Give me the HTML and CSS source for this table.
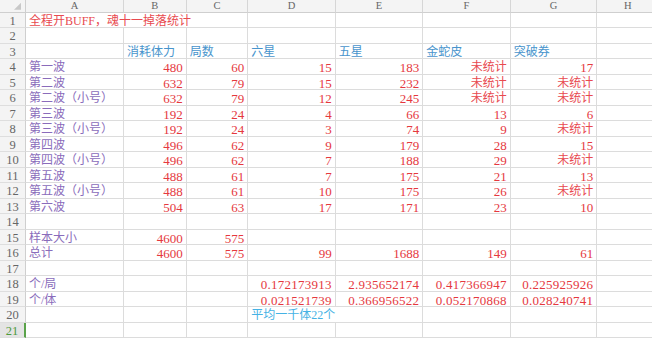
FILE: index.html
```html
<!DOCTYPE html>
<html lang="zh-CN">
<head>
<meta charset="utf-8">
<title>魂十一掉落统计</title>
<link rel="stylesheet" href="styles.css">
</head>
<body>
<div class="sheet">
  <div class="corner"><span class="tri"></span></div>
  <div class="ch">A</div><div class="ch">B</div><div class="ch">C</div><div class="ch">D</div><div class="ch">E</div><div class="ch">F</div><div class="ch">G</div><div class="ch">H</div>

  <div class="rh">1</div><div class="c title span3">全程开BUFF，魂十一掉落统计</div><div class="c"></div><div class="c"></div><div class="c"></div><div class="c"></div><div class="c"></div>

  <div class="rh">2</div><div class="c"></div><div class="c"></div><div class="c"></div><div class="c"></div><div class="c"></div><div class="c"></div><div class="c"></div><div class="c"></div>

  <div class="rh">3</div><div class="c"></div><div class="c hd">消耗体力</div><div class="c hd">局数</div><div class="c hd">六星</div><div class="c hd">五星</div><div class="c hd">金蛇皮</div><div class="c hd">突破券</div><div class="c"></div>

  <div class="rh">4</div><div class="c lb">第一波</div><div class="c n">480</div><div class="c n">60</div><div class="c n">15</div><div class="c n">183</div><div class="c nt">未统计</div><div class="c n">17</div><div class="c"></div>

  <div class="rh">5</div><div class="c lb">第二波</div><div class="c n">632</div><div class="c n">79</div><div class="c n">15</div><div class="c n">232</div><div class="c nt">未统计</div><div class="c nt">未统计</div><div class="c"></div>

  <div class="rh">6</div><div class="c lb">第二波（小号）</div><div class="c n">632</div><div class="c n">79</div><div class="c n">12</div><div class="c n">245</div><div class="c nt">未统计</div><div class="c nt">未统计</div><div class="c"></div>

  <div class="rh">7</div><div class="c lb">第三波</div><div class="c n">192</div><div class="c n">24</div><div class="c n">4</div><div class="c n">66</div><div class="c n">13</div><div class="c n">6</div><div class="c"></div>

  <div class="rh">8</div><div class="c lb">第三波（小号）</div><div class="c n">192</div><div class="c n">24</div><div class="c n">3</div><div class="c n">74</div><div class="c n">9</div><div class="c nt">未统计</div><div class="c"></div>

  <div class="rh">9</div><div class="c lb">第四波</div><div class="c n">496</div><div class="c n">62</div><div class="c n">9</div><div class="c n">179</div><div class="c n">28</div><div class="c n">15</div><div class="c"></div>

  <div class="rh">10</div><div class="c lb">第四波（小号）</div><div class="c n">496</div><div class="c n">62</div><div class="c n">7</div><div class="c n">188</div><div class="c n">29</div><div class="c nt">未统计</div><div class="c"></div>

  <div class="rh">11</div><div class="c lb">第五波</div><div class="c n">488</div><div class="c n">61</div><div class="c n">7</div><div class="c n">175</div><div class="c n">21</div><div class="c n">13</div><div class="c"></div>

  <div class="rh">12</div><div class="c lb">第五波（小号）</div><div class="c n">488</div><div class="c n">61</div><div class="c n">10</div><div class="c n">175</div><div class="c n">26</div><div class="c nt">未统计</div><div class="c"></div>

  <div class="rh">13</div><div class="c lb">第六波</div><div class="c n">504</div><div class="c n">63</div><div class="c n">17</div><div class="c n">171</div><div class="c n">23</div><div class="c n">10</div><div class="c"></div>

  <div class="rh">14</div><div class="c"></div><div class="c"></div><div class="c"></div><div class="c"></div><div class="c"></div><div class="c"></div><div class="c"></div><div class="c"></div>

  <div class="rh">15</div><div class="c lb">样本大小</div><div class="c n">4600</div><div class="c n">575</div><div class="c"></div><div class="c"></div><div class="c"></div><div class="c"></div><div class="c"></div>

  <div class="rh">16</div><div class="c lb">总计</div><div class="c n">4600</div><div class="c n">575</div><div class="c n">99</div><div class="c n">1688</div><div class="c n">149</div><div class="c n">61</div><div class="c"></div>

  <div class="rh">17</div><div class="c"></div><div class="c"></div><div class="c"></div><div class="c"></div><div class="c"></div><div class="c"></div><div class="c"></div><div class="c"></div>

  <div class="rh">18</div><div class="c lb">个/局</div><div class="c"></div><div class="c"></div><div class="c n dec">0.172173913</div><div class="c n dec">2.935652174</div><div class="c n dec">0.417366947</div><div class="c n dec">0.225925926</div><div class="c"></div>

  <div class="rh">19</div><div class="c lb">个/体</div><div class="c"></div><div class="c"></div><div class="c n dec">0.021521739</div><div class="c n dec">0.366956522</div><div class="c n dec">0.052170868</div><div class="c n dec">0.028240741</div><div class="c"></div>

  <div class="rh">20</div><div class="c"></div><div class="c"></div><div class="c"></div><div class="c note span2">平均一千体22个</div><div class="c"></div><div class="c"></div><div class="c"></div>

  <div class="rh sel">21</div><div class="c"></div><div class="c"></div><div class="c"></div><div class="c"></div><div class="c"></div><div class="c"></div><div class="c"></div><div class="c"></div>
</div>
</body>
</html>
```

FILE: styles.css
```css
html, body {
  margin: 0;
  padding: 0;
  background: #ffffff;
  overflow: hidden;
}

.sheet {
  display: grid;
  grid-template-columns: 26px 98px 62.7px 61.6px 87.4px 87.6px 87.4px 86.6px 62px;
  grid-template-rows: 12.7px repeat(21, 15.5px);
  width: 660px;
  font-family: "Liberation Serif", "Noto Sans CJK SC", serif;
  font-size: 12px;
}

.corner {
  background: #f4f4f4;
  border-right: 1px solid #cfcfcf;
  border-bottom: 1px solid #cfcfcf;
  box-sizing: border-box;
  display: flex;
  justify-content: flex-end;
  align-items: flex-end;
  padding: 0 4px 2px 0;
}

.tri {
  width: 7px;
  height: 7px;
  background: #c8c8c8;
  clip-path: polygon(100% 0, 100% 100%, 0 100%);
}

.ch {
  background: #f4f4f4;
  border-right: 1px solid #d6d6d6;
  border-bottom: 1px solid #cfcfcf;
  box-sizing: border-box;
  color: #666666;
  font-size: 10.5px;
  line-height: 12px;
  text-align: center;
}

.rh {
  background: #f4f4f4;
  border-right: 1px solid #cfcfcf;
  border-bottom: 1px solid #dedede;
  box-sizing: border-box;
  color: #666666;
  font-size: 12.5px;
  line-height: 15.5px;
  padding-top: 1px;
  text-align: center;
}

.rh.sel {
  background: #e4e4e4;
  color: #4f9a3d;
  border-right: 2px solid #5aa34a;
}

.c {
  border-right: 1px solid #dcdcdc;
  border-bottom: 1px solid #dcdcdc;
  box-sizing: border-box;
  line-height: 15.5px;
  padding: 1px 3px 0 3px;
  white-space: nowrap;
  min-width: 0;
}

.span3 { grid-column: span 3; }
.span2 { grid-column: span 2; }

.title {
  color: #e84a4f;
}

.hd {
  color: #4894cc;
}

.lb {
  color: #8a6cbb;
}

.n {
  color: #e5383e;
  text-align: right;
  font-size: 13px;
}

.dec {
  letter-spacing: 0.25px;
}

.nt {
  color: #e84a4f;
  text-align: right;
}

.note {
  color: #45b2e4;
}
```
